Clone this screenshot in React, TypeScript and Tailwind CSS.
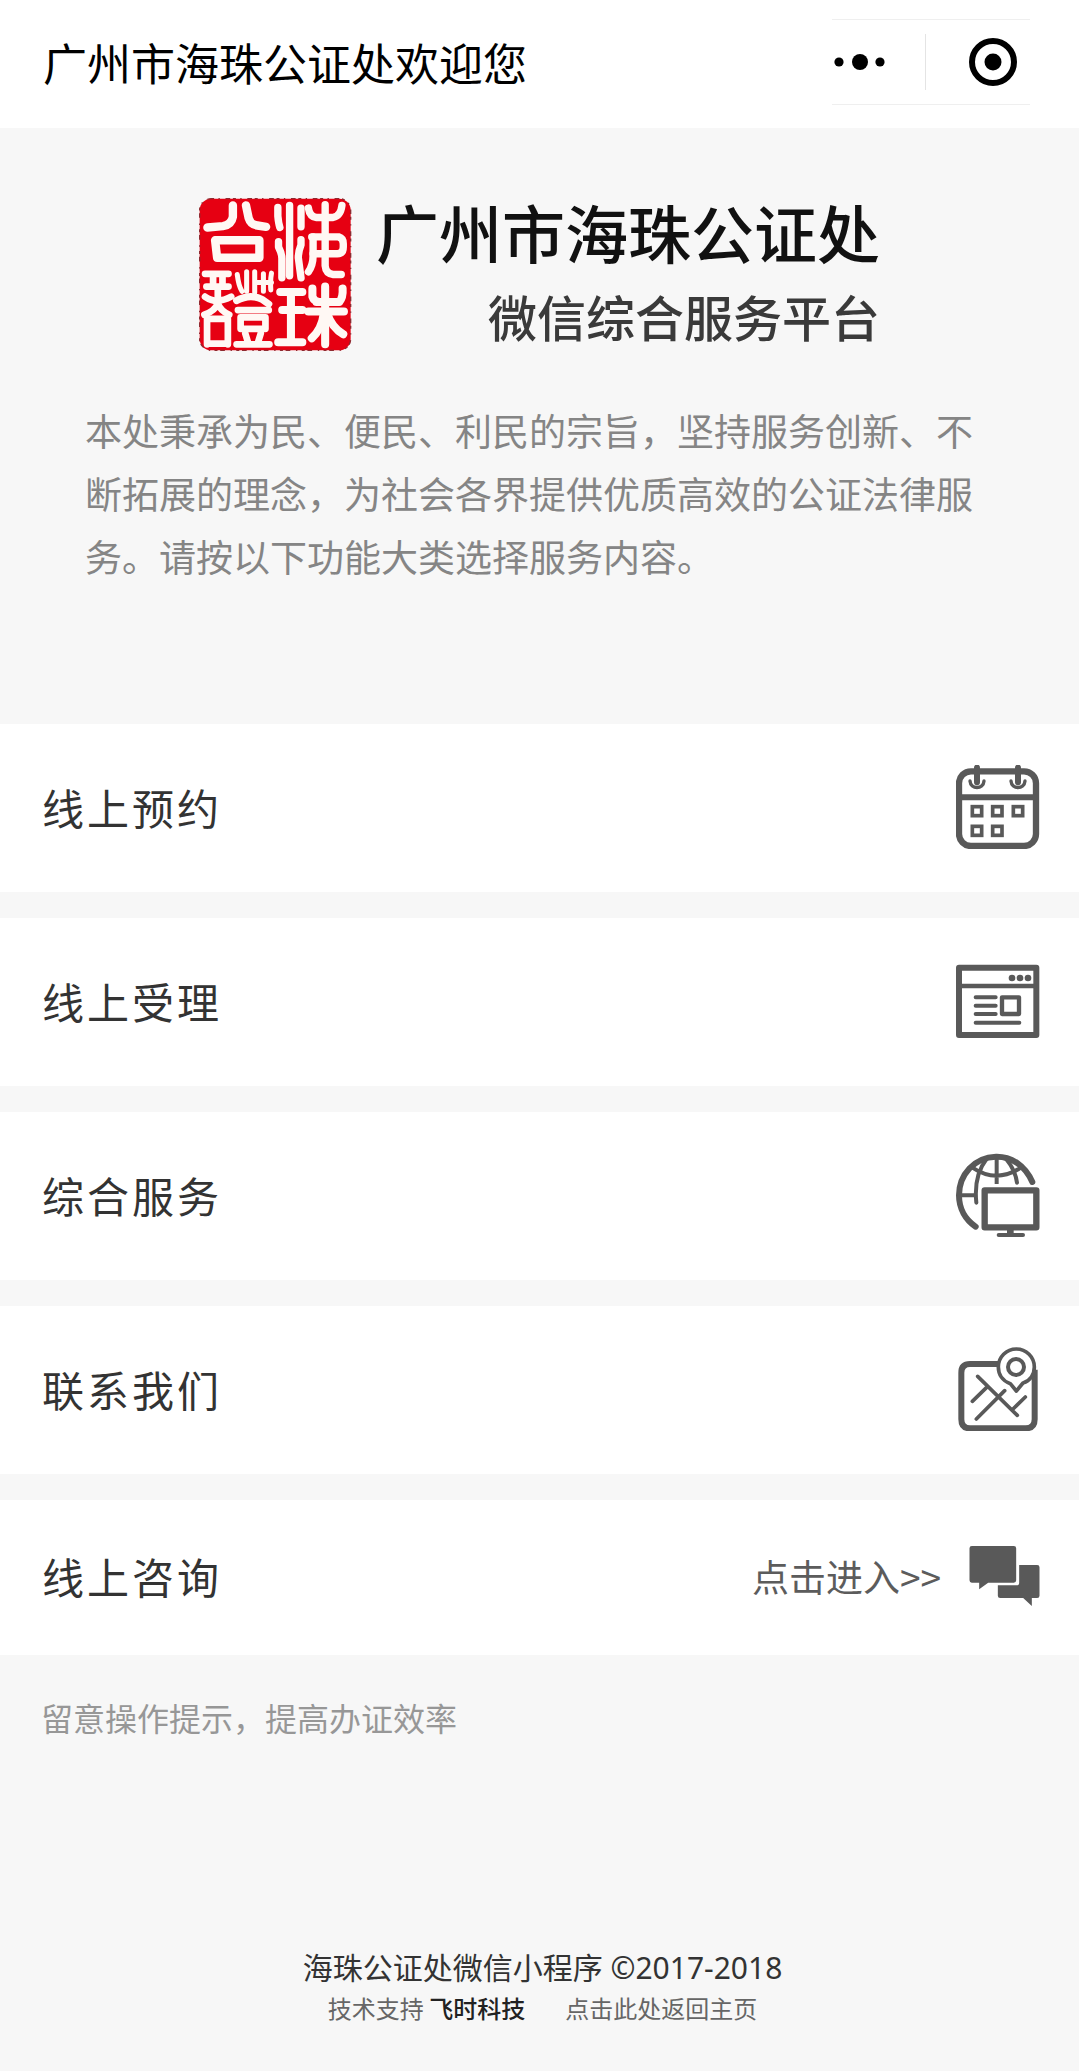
import type { ReactNode } from "react";

const INK = "#595959";

function Seal() {
  return (
    <svg viewBox="42 42 456 456" className="size-[153px] shrink-0" role="img" aria-label="海珠公证印章">
      <rect x="44" y="44" width="450" height="452" rx="34" fill="#e60012" />
      <rect
        x="44"
        y="44"
        width="450"
        height="452"
        rx="34"
        fill="none"
        stroke="#8f2a30"
        strokeWidth="4"
        strokeDasharray="9 13 4 17 14 8"
      />
      <g fill="none" stroke="#fff8f4" strokeLinecap="round" strokeLinejoin="round">
        <g strokeWidth="25">
          <path d="M143 64v34q-4 24-30 28l-46 4" />
          <path d="M182 64l8 38q6 20 26 22l26 4" />
          <path d="M90 168h132v52H96z" />
        </g>
        <g strokeWidth="22">
          <path d="M277 70v26q2 22 6 34M312 64v210M346 72v56M279 172v16q10 20 10 34v58M346 166v16q-8 20-8 38l8 60" />
          <path d="M368 72q4 26 24 28h50q22-4 26-36" />
          <path d="M418 62v182q2 24 24 26h24" />
          <path d="M378 158h80q14 4 14 20v10q0 20-18 20h-72" />
          <path d="M382 158v56q0 28-14 48" />
        </g>
        <g strokeWidth="20">
          <path d="M60 268h70M64 306h66M84 272v30M112 272v30" />
          <path d="M60 336q34 24 78 0M98 312v38" />
          <path d="M98 356q-8 22-40 34M98 356q8 22 34 34" />
          <path d="M66 402v76M66 402h62M128 402v76M66 476h62" />
        </g>
        <g strokeWidth="15">
          <path d="M156 270q4 34 14 50M184 262v58M208 262v62M234 268v52M258 266q-4 20-2 50M208 294h50" />
          <path d="M154 348q40-22 76-4l20 14" strokeWidth="21" />
          <path d="M158 376h92M166 398h74v34h-74zM180 446l8 26M226 446l-8 26M154 478h98" strokeWidth="20" />
        </g>
        <g strokeWidth="24">
          <path d="M284 322h66M290 376h60M278 472h72M316 322v150" />
          <path d="M380 312v24q4 14 20 16M368 380h106M470 312q2 26-10 40h-68M418 306v172" />
          <path d="M414 386q-6 46-36 74M424 386q14 42 48 62" />
        </g>
      </g>
    </svg>
  );
}

function CalendarIcon() {
  return (
    <svg viewBox="78 74 252 252" className="size-[84px]" fill="none" stroke={INK} aria-hidden="true">
      <rect x="87" y="93" width="231" height="224" rx="36" strokeWidth="19" />
      <path d="M88 171h230" strokeWidth="18" />
      <path d="M141 82v44M264 82v44" strokeWidth="18" strokeLinecap="round" />
      <path d="M120 122c2 26 40 26 42 0M243 122c2 26 40 26 42 0" strokeWidth="10" strokeLinecap="round" />
      <g strokeWidth="11">
        <rect x="127" y="199" width="28" height="27" />
        <rect x="188" y="199" width="28" height="27" />
        <rect x="250" y="199" width="28" height="27" />
        <rect x="127" y="258" width="28" height="27" />
        <rect x="188" y="258" width="28" height="27" />
      </g>
    </svg>
  );
}

function WindowIcon() {
  return (
    <svg viewBox="78 57 252 252" className="size-[84px]" fill="none" stroke={INK} aria-hidden="true">
      <rect x="87" y="83" width="232" height="202" strokeWidth="18" strokeLinejoin="round" />
      <path d="M86 138h233" strokeWidth="13" />
      <g fill={INK} stroke="none">
        <circle cx="246" cy="114" r="10" />
        <circle cx="270" cy="114" r="10" />
        <circle cx="294" cy="114" r="10" />
      </g>
      <path d="M137 172h60M137 197h60M137 222h60M137 248h131" strokeWidth="12" strokeLinecap="round" />
      <rect x="216" y="172" width="51" height="50" strokeWidth="13" strokeLinejoin="round" />
    </svg>
  );
}

function GlobeIcon() {
  return (
    <svg viewBox="78 67 252 252" className="size-[84px]" fill="none" stroke={INK} aria-hidden="true">
      <path d="M307 154C285 104 244 77 198 78 133 80 87 132 87 194c0 40 20 74 50 94" strokeWidth="18" strokeLinecap="round" />
      <path d="M200 84v76M126 110q74 50 148 0M96 194h42" strokeWidth="12" />
      <path d="M170 84c-28 36-36 84-31 132M228 84c18 22 30 48 33 72" strokeWidth="12" strokeLinecap="round" />
      <rect x="164" y="179" width="155" height="111" strokeWidth="19" strokeLinejoin="round" />
      <path d="M241 292v20" strokeWidth="20" />
      <path d="M206 313h73" strokeWidth="12" strokeLinecap="round" />
    </svg>
  );
}

function MapIcon() {
  return (
    <svg viewBox="78 82 252 252" className="size-[84px]" fill="none" stroke={INK} aria-hidden="true">
      <path d="M206 133h-86q-26 0-26 26v140q0 27 26 27h167q27 0 27-27V150" strokeWidth="18" />
      <path
        d="M259 214l-18-22c-24-8-36-28-36-50a54 54 0 0 1 108 0c0 22-12 42-34 48z"
        fill="#fff"
        strokeWidth="11"
        strokeLinejoin="round"
      />
      <circle cx="258" cy="142" r="24" strokeWidth="12" />
      <path d="M143 170l119 117M170 203l-43 42M224 213l-85 85M286 232l-40 39" strokeWidth="11" strokeLinecap="round" />
    </svg>
  );
}

function ChatIcon() {
  return (
    <svg viewBox="715 170 212 180" className="h-[60px] w-[71px]" fill={INK} aria-hidden="true">
      <path d="M723 170h126q7 0 7 7v96q0 7-7 7h-77l-27 20v-20h-22q-7 0-7-7v-96q0-7 7-7z" />
      <path d="M865 227h54q7 0 7 7v85q0 7-7 7h-16v24l-26-24h-69q-7 0-7-7v-31h56q8 0 8-8z" />
    </svg>
  );
}

const services: { label: string; icon: ReactNode }[] = [
  { label: "线上预约", icon: <CalendarIcon /> },
  { label: "线上受理", icon: <WindowIcon /> },
  { label: "综合服务", icon: <GlobeIcon /> },
  { label: "联系我们", icon: <MapIcon /> },
];

function TopBar() {
  return (
    <header className="flex h-32 items-center justify-between bg-white pr-[49px] pb-1 pl-[43px]">
      <div className="text-[44px] leading-[64px] text-black">广州市海珠公证处欢迎您</div>
      <div className="flex h-[86px] w-[198px] items-center border-y border-[#efefef]">
        <button type="button" aria-label="更多" className="flex h-14 flex-1 items-center border-r border-[#e4e4e4] pl-0.5">
          <svg viewBox="0 0 52 18" className="h-[18px] w-[52px]" aria-hidden="true">
            <circle cx="5" cy="9" r="4.6" />
            <circle cx="26" cy="9" r="8" />
            <circle cx="46" cy="9" r="4.6" />
          </svg>
        </button>
        <button type="button" aria-label="关闭" className="flex w-[104px] items-center justify-end pr-[13px]">
          <svg viewBox="0 0 48 48" className="size-12" aria-hidden="true">
            <circle cx="24" cy="24" r="21" fill="none" stroke="#000" strokeWidth="6" />
            <circle cx="24" cy="24" r="8.5" />
          </svg>
        </button>
      </div>
    </header>
  );
}

export default function App() {
  return (
    <div className="flex min-h-screen flex-col bg-[#f7f7f7] font-['Noto_Sans_CJK_SC',sans-serif]">
      <TopBar />
      <section className="px-[85px] pt-[61px] pb-[136px]">
        <div className="flex items-center justify-center gap-6">
          <Seal />
          <div className="text-right font-medium">
            <h1 className="text-[63px] leading-[84px] text-[#111]">广州市海珠公证处</h1>
            <p className="text-[49px] leading-[86px] text-[#3a3a3a]">微信综合服务平台</p>
          </div>
        </div>
        <p className="mt-10 text-[37px] leading-[63px] text-[#858585]">
          本处秉承为民、便民、利民的宗旨，坚持服务创新、不断拓展的理念，为社会各界提供优质高效的公证法律服务。请按以下功能大类选择服务内容。
        </p>
      </section>
      <nav className="flex flex-col gap-[26px]">
        {services.map((s) => (
          <a key={s.label} href="#" className="flex h-[168px] items-center justify-between bg-white pr-[39px] pb-[3px] pl-[42px]">
            <span className="text-[42px] leading-[64px] tracking-[3px] text-[#333]">{s.label}</span>
            {s.icon}
          </a>
        ))}
        <a href="#" className="flex h-[155px] items-center justify-between bg-white pr-[39px] pb-[3px] pl-[42px]">
          <span className="text-[42px] leading-[64px] tracking-[3px] text-[#333]">线上咨询</span>
          <span className="flex items-center gap-7 text-[37px] leading-[64px] text-[#5c5c5c]">
            点击进入&gt;&gt;
            <ChatIcon />
          </span>
        </a>
      </nav>
      <p className="mt-[38px] px-[41px] text-[32px] leading-[48px] text-[#979797]">留意操作提示，提高办证效率</p>
      <footer className="mt-auto pb-[43px] pl-1.5 text-center text-[#666]">
        <p className="font-['Noto_Sans','Noto_Sans_CJK_SC',sans-serif] text-[30px] leading-[40px] text-[#333]">
          海珠公证处微信小程序 ©2017-2018
        </p>
        <p className="flex justify-center gap-10 text-[24px] leading-[40px]">
          <span>
            技术支持 <b className="font-medium text-[#222]">飞时科技</b>
          </span>
          <a href="#">点击此处返回主页</a>
        </p>
      </footer>
    </div>
  );
}
